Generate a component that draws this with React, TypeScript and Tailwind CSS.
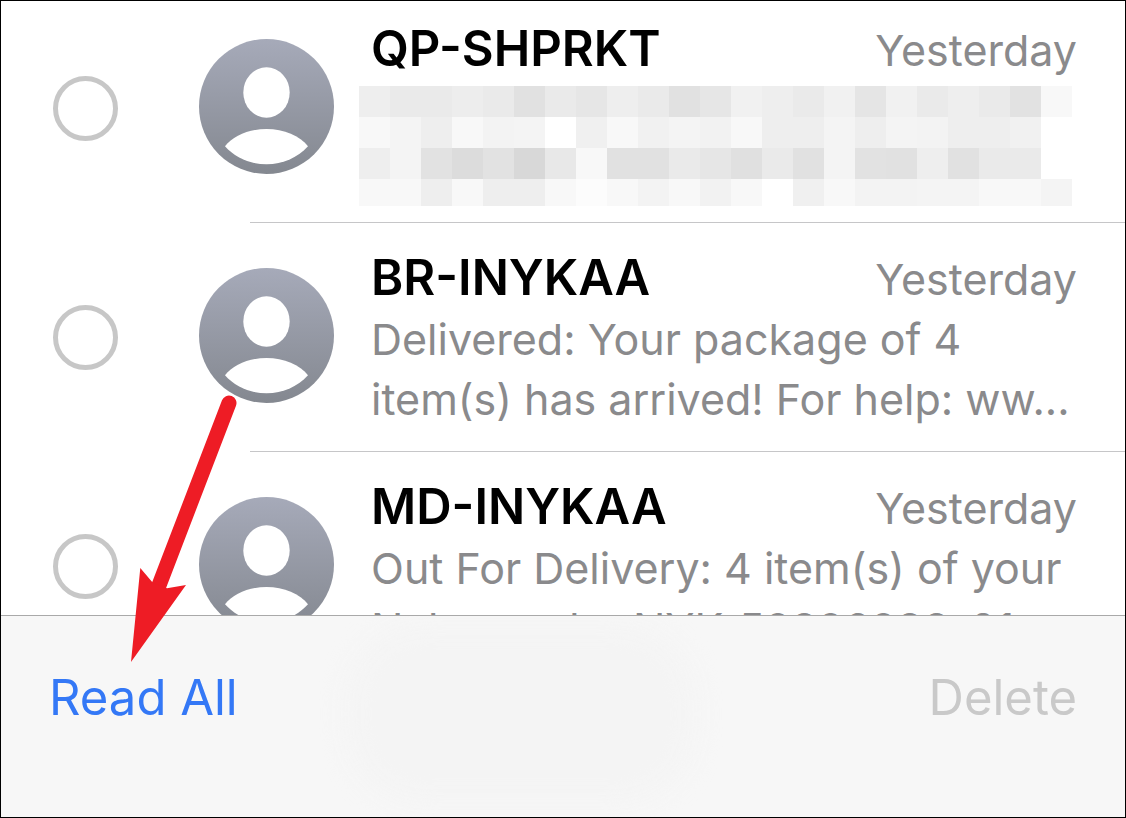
import { clsx } from 'clsx';

interface Message {
  id: string;
  sender: string;
  date: string;
  preview?: string[];
}

const MESSAGES: Message[] = [
  { id: 'qp', sender: 'QP-SHPRKT', date: 'Yesterday' },
  {
    id: 'br',
    sender: 'BR-INYKAA',
    date: 'Yesterday',
    preview: ['Delivered: Your package of 4', 'item(s) has arrived! For help: ww...'],
  },
  {
    id: 'md',
    sender: 'MD-INYKAA',
    date: 'Yesterday',
    preview: ['Out For Delivery: 4 item(s) of your', 'Nykaa order NYK-52826288-01...'],
  },
];

// Grey level of every mosaic cell, one hex pair per cell
const MOSAIC = [
  'ee ea ea ed ea e1 ea e6 ee ea e1 e6 f1 ee ea f1 e5 f1 ea ee ea e2 f8',
  'f8 f4 ee f8 f3 f4 ff f0 f8 f1 f4 f2 f8 ee ee f4 ee f4 f3 ee ee f1 ff',
  'ee f4 e2 dc e2 d8 e8 f8 e1 e1 ea e6 e0 ea e1 f4 e2 e1 ee e1 ea ea ff',
  'f8 f8 ee f8 ee ee f8 fc f8 f3 f8 f2 f8 ff f0 f8 f3 f3 f4 f4 f8 f8 f4',
].map(row => row.split(' '));

const CELL = 31;

function Mosaic() {
  return (
    <svg
      className="-ml-3 mt-1.5 block h-[120px] w-[713px] shrink-0"
      viewBox="0 0 713 120"
      shapeRendering="crispEdges"
      role="img"
      aria-label="Hidden message preview"
    >
      {MOSAIC.map((row, y) =>
        row.map((level, x) => (
          <rect
            key={`${x}-${y}`}
            x={x * CELL}
            y={y * CELL}
            width={CELL}
            height={CELL}
            fill={`#${level}${level}${level}`}
          />
        ))
      )}
    </svg>
  );
}

function Avatar({ id }: { id: string }) {
  const gradientId = `avatar-${id}`;
  return (
    <svg
      className="ml-[81px] mt-[45px] size-[135px] shrink-0"
      viewBox="0 0 135 135"
      aria-hidden="true"
    >
      <defs>
        <linearGradient id={gradientId} x1="0" y1="0" x2="0" y2="1">
          <stop offset="0" stopColor="#a6aab9" />
          <stop offset="1" stopColor="#848890" />
        </linearGradient>
      </defs>
      <circle cx="67.5" cy="67.5" r="67.5" fill={`url(#${gradientId})`} />
      <ellipse cx="67.5" cy="53.5" rx="23.2" ry="25.2" fill="#fff" />
      <path
        d="M26 107.3C34 97 50 90 67.5 90S101 97 109 107.3C99 118.5 84 125.3 67.5 125.3S36 118.5 26 107.3Z"
        fill="#fff"
      />
    </svg>
  );
}

function MessageRow({ message }: { message: Message }) {
  return (
    <li>
      <div className="flex h-[228px] items-start">
        <input
          type="checkbox"
          aria-label={`Select ${message.sender}`}
          className="ml-[52px] mt-[82px] size-[65px] shrink-0 appearance-none rounded-full border-5 border-[#c7c7c7] checked:bg-[#3478f6]"
        />
        <Avatar id={message.id} />
        <div className="ml-[37px] mr-12 min-w-0 flex-1 pt-6">
          <div className="flex items-baseline justify-between whitespace-nowrap">
            <h2 className="text-[49px] leading-[62px] font-semibold text-black">
              {message.sender}
            </h2>
            <span className="text-[43px] leading-[60px] text-[#8a8a8c]">{message.date}</span>
          </div>
          {message.preview ? (
            <p className="text-[43px] leading-[60px] whitespace-nowrap text-[#8a8a8c]">
              {message.preview.map(line => (
                <span key={line} className="block">
                  {line}
                </span>
              ))}
            </p>
          ) : (
            <Mosaic />
          )}
        </div>
      </div>
      <hr className="ml-[249px] border-t border-[#c6c6c8]" />
    </li>
  );
}

function ActionButton({ label, disabled }: { label: string; disabled?: boolean }) {
  return (
    <button
      type="button"
      disabled={disabled}
      className={clsx(
        'relative text-[49px] leading-[60px]',
        disabled ? 'text-[#c9c9c9]' : 'text-[#3478f6]'
      )}
    >
      {label}
    </button>
  );
}

function Arrow() {
  return (
    <svg
      className="pointer-events-none absolute top-[389px] left-[119px] h-[280px] w-[130px]"
      viewBox="120 390 130 280"
      aria-hidden="true"
    >
      <path d="M229 403L158 588" stroke="#ee1c25" strokeWidth="15" strokeLinecap="round" />
      <path d="M131 662L140.3 568L153 583L167 588.3L186 585Z" fill="#ee1c25" />
    </svg>
  );
}

export default function App() {
  return (
    <div className="relative flex h-screen flex-col overflow-hidden border border-black bg-white font-['Inter',sans-serif]">
      <main className="min-h-0 flex-1 overflow-hidden">
        <ul className="-mt-[7px]">
          {MESSAGES.map(message => (
            <MessageRow key={message.id} message={message} />
          ))}
        </ul>
      </main>
      <footer className="relative flex h-[202px] shrink-0 items-start justify-between overflow-hidden border-t border-[#a9a9a9] bg-[#f7f7f7] px-12 pt-[52px]">
        <div className="absolute top-2 left-[345px] h-[180px] w-[350px] rounded-[80px] bg-[#f4f4f4] blur-md" />
        <ActionButton label="Read All" />
        <ActionButton label="Delete" disabled />
      </footer>
      <Arrow />
    </div>
  );
}
